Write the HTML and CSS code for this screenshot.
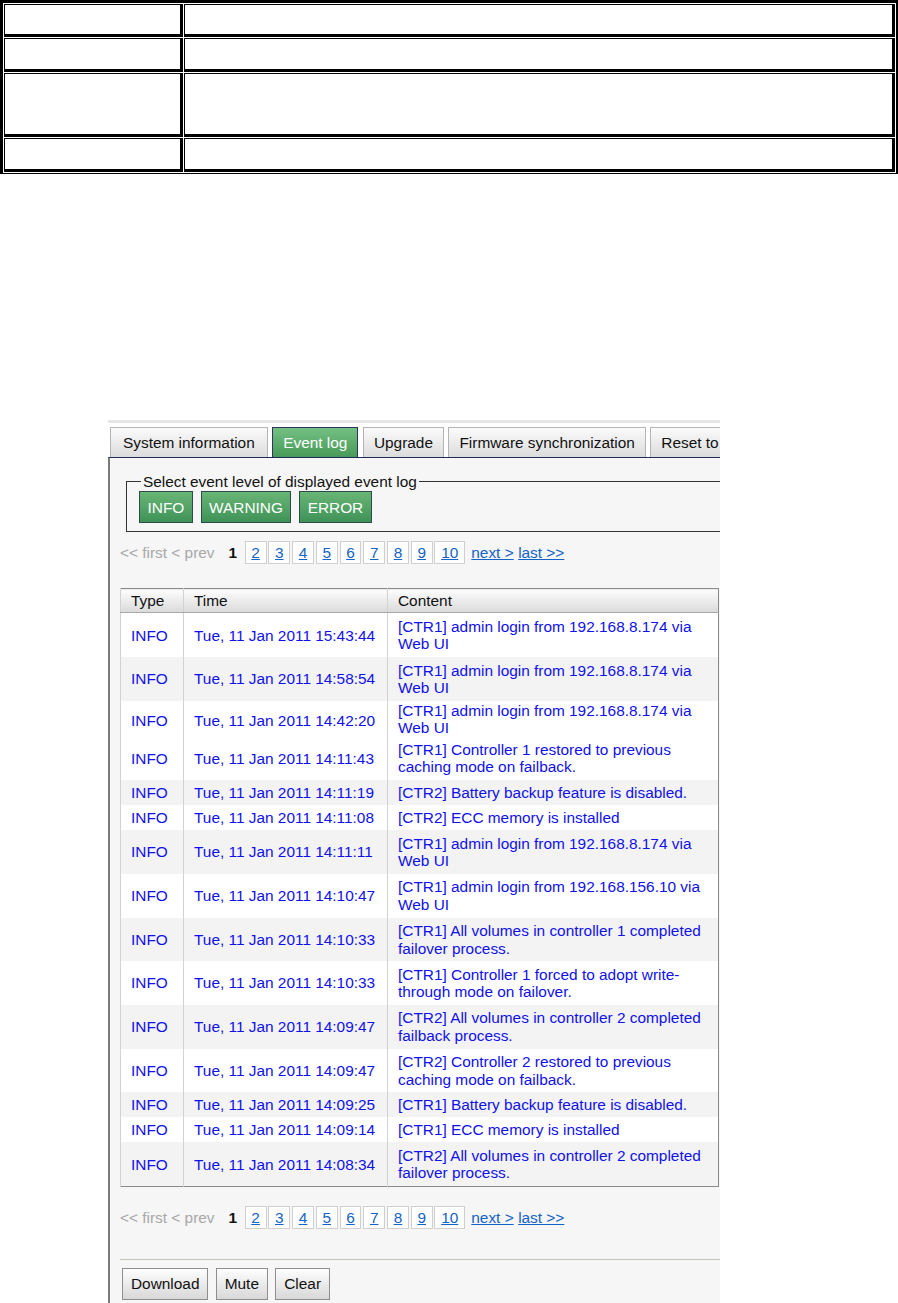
FILE: index.html
```html
<!DOCTYPE html>
<html lang="en">
  <head>
    <meta charset="UTF-8" />
    <meta name="viewport" content="width=device-width, initial-scale=1.0" />
    <title>Event log</title>
    <link rel="stylesheet" href="styles.css">
  </head>
  <body>
    <table class="spec">
      <tr class="r-short"><td class="key"></td><td></td></tr>
      <tr class="r-short2"><td class="key"></td><td></td></tr>
      <tr class="r-tall"><td class="key"></td><td></td></tr>
      <tr class="r-short2"><td class="key"></td><td></td></tr>
    </table>

    <div class="shot">
      <div class="tabs">
        <span class="tab first">System information</span>
        <span class="tab active">Event log</span>
        <span class="tab">Upgrade</span>
        <span class="tab">Firmware synchronization</span>
        <span class="tab">Reset to defaults</span>
      </div>

      <div class="panel">
        <fieldset class="levels">
          <legend>Select event level of displayed event log</legend>
          <button class="btn green">INFO</button>
          <button class="btn green">WARNING</button>
          <button class="btn green">ERROR</button>
        </fieldset>

        <div class="pager">
          <span class="off">&lt;&lt; first &lt; prev</span>
          <b>1</b>
          <a class="num" href="#">2</a>
          <a class="num" href="#">3</a>
          <a class="num" href="#">4</a>
          <a class="num" href="#">5</a>
          <a class="num" href="#">6</a>
          <a class="num" href="#">7</a>
          <a class="num" href="#">8</a>
          <a class="num" href="#">9</a>
          <a class="num" href="#">10</a>
          <a class="step" href="#">next &gt;</a>
          <a class="step" href="#">last &gt;&gt;</a>
        </div>

        <table class="log">
          <colgroup>
            <col class="c-type" />
            <col class="c-time" />
            <col class="c-msg" />
          </colgroup>
          <thead>
            <tr><th>Type</th><th>Time</th><th>Content</th></tr>
          </thead>
          <tbody>
            <tr class="two"><td>INFO</td><td>Tue, 11 Jan 2011 15:43:44</td><td>[CTR1] admin login from 192.168.8.174 via Web UI</td></tr>
            <tr class="two alt"><td>INFO</td><td>Tue, 11 Jan 2011 14:58:54</td><td>[CTR1] admin login from 192.168.8.174 via Web UI</td></tr>
            <tr class="cut"><td>INFO</td><td>Tue, 11 Jan 2011 14:42:20</td><td class="msg">[CTR1] admin login from 192.168.8.174 via Web UI</td></tr>
            <tr class="two"><td>INFO</td><td>Tue, 11 Jan 2011 14:11:43</td><td>[CTR1] Controller 1 restored to previous caching mode on failback.</td></tr>
            <tr class="alt"><td>INFO</td><td>Tue, 11 Jan 2011 14:11:19</td><td>[CTR2] Battery backup feature is disabled.</td></tr>
            <tr><td>INFO</td><td>Tue, 11 Jan 2011 14:11:08</td><td>[CTR2] ECC memory is installed</td></tr>
            <tr class="two alt"><td>INFO</td><td>Tue, 11 Jan 2011 14:11:11</td><td>[CTR1] admin login from 192.168.8.174 via Web UI</td></tr>
            <tr class="two"><td>INFO</td><td>Tue, 11 Jan 2011 14:10:47</td><td>[CTR1] admin login from 192.168.156.10 via Web UI</td></tr>
            <tr class="two alt"><td>INFO</td><td>Tue, 11 Jan 2011 14:10:33</td><td>[CTR1] All volumes in controller 1 completed failover process.</td></tr>
            <tr class="two"><td>INFO</td><td>Tue, 11 Jan 2011 14:10:33</td><td>[CTR1] Controller 1 forced to adopt write-through mode on failover.</td></tr>
            <tr class="two alt"><td>INFO</td><td>Tue, 11 Jan 2011 14:09:47</td><td>[CTR2] All volumes in controller 2 completed failback process.</td></tr>
            <tr class="two"><td>INFO</td><td>Tue, 11 Jan 2011 14:09:47</td><td>[CTR2] Controller 2 restored to previous caching mode on failback.</td></tr>
            <tr class="alt"><td>INFO</td><td>Tue, 11 Jan 2011 14:09:25</td><td>[CTR1] Battery backup feature is disabled.</td></tr>
            <tr><td>INFO</td><td>Tue, 11 Jan 2011 14:09:14</td><td>[CTR1] ECC memory is installed</td></tr>
            <tr class="two alt"><td>INFO</td><td>Tue, 11 Jan 2011 14:08:34</td><td>[CTR2] All volumes in controller 2 completed failover process.</td></tr>
          </tbody>
        </table>

        <div class="pager bottom">
          <span class="off">&lt;&lt; first &lt; prev</span>
          <b>1</b>
          <a class="num" href="#">2</a>
          <a class="num" href="#">3</a>
          <a class="num" href="#">4</a>
          <a class="num" href="#">5</a>
          <a class="num" href="#">6</a>
          <a class="num" href="#">7</a>
          <a class="num" href="#">8</a>
          <a class="num" href="#">9</a>
          <a class="num" href="#">10</a>
          <a class="step" href="#">next &gt;</a>
          <a class="step" href="#">last &gt;&gt;</a>
        </div>

        <div class="actions">
          <button class="btn">Download</button>
          <button class="btn">Mute</button>
          <button class="btn">Clear</button>
        </div>
      </div>
    </div>
  </body>
</html>
```

FILE: styles.css
```css
body {
  margin: 0;
  background: #fff;
  font-family: "Liberation Sans", Arial, sans-serif;
  font-size: 15.4px;
  line-height: 17.4px;
  color: #111;
}

/* document table above the screenshot */
.spec {
  width: 898px;
  table-layout: fixed;
  border-collapse: separate;
  border-spacing: 1px;
  border-style: solid;
  border-color: #000;
  border-width: 3px 2px 1px 3px;
}

.spec td {
  padding: 0;
  border-style: solid;
  border-color: #000;
  border-width: 1px 3px 3px 1px;
}

.spec .key {
  width: 175px;
}

.r-short { height: 33px; }
.r-short2 { height: 34px; }
.r-tall { height: 64px; }

/* screenshot of the web UI */
.shot {
  margin: 246px 0 0 108px;
  width: 612px;
  height: 883px;
  overflow: hidden;
  border-top: 3px solid #e6e6e6;
}

.tabs {
  display: flex;
  gap: 4.5px;
  padding: 4px 0 0 2px;
  white-space: nowrap;
  background: #fff;
}

.tab {
  flex: none;
  height: 29px;
  line-height: 29px;
  padding: 0 10px;
  border: 1px solid #b4b4b4;
  border-bottom: none;
  background: linear-gradient(#fbfbfb, #dcdcdc);
  color: #111;
}

.tab.first {
  padding: 0 12px;
}

.tab.active {
  border-color: #2e3560;
  background: linear-gradient(#74c083, #479a58);
  color: #fff;
}

.panel {
  width: 700px;
  height: 100%;
  padding: 15px 0 0 10px;
  border-top: 1px solid #1f2b5a;
  border-left: 2px solid #7a7a7a;
  background: #f6f6f6;
}

.levels {
  margin: 0 0 0 6px;
  padding: 1px 12px 8px;
  border: 1px solid #333;
}

.levels legend {
  margin-left: 2px;
  padding: 0 2px;
}

.btn {
  height: 32px;
  padding: 0 8px;
  margin: 0 3px 0 0;
  font: inherit;
  color: #111;
  border: 1px solid #8e8e8e;
  background: linear-gradient(#fefefe, #d8d8d8);
  cursor: pointer;
}

.btn.green {
  margin-right: 3.5px;
  padding: 0 7.5px;
  color: #fff;
  border-color: #2f4a4a;
  background: linear-gradient(#68b676, #3f9257);
}

.pager {
  display: flex;
  align-items: center;
  margin-top: 9px;
  height: 23px;
}

.pager .off {
  color: #a8a8a8;
  margin-right: 14px;
}

.pager b {
  margin-right: 7.5px;
}

.pager a {
  color: #1463c8;
}

.pager .num {
  height: 21px;
  line-height: 21px;
  padding: 0 5.7px;
  margin-right: 1.8px;
  border: 1px solid #cfcfcf;
  background: #fff;
}

.pager .step {
  margin-left: 4.5px;
}

.log {
  width: 598px;
  margin-top: 24px;
  table-layout: fixed;
  border-collapse: collapse;
  border: 1px solid #8a8a8a;
  background: #fff;
}

.c-type { width: 63px; }
.c-time { width: 204px; }
.c-msg { width: 331px; }

.log th {
  height: 23px;
  padding: 0 10px;
  text-align: left;
  font-weight: normal;
  color: #111;
  border-left: 1px solid #d2d2d2;
  border-bottom: 1px solid #a8a8a8;
  background: linear-gradient(#fdfdfd, #dadada);
}

.log td {
  height: 25px;
  padding: 0 10px;
  color: #1010ee;
  border-left: 1px solid #d2d2d2;
}

.log tr.two td {
  height: 43.7px;
}

.log tr.alt td {
  background: #f3f3f3;
}

.log tr.cut td {
  height: 24px;
  vertical-align: top;
  padding-top: 11px;
}

.log tr.cut td.msg {
  padding-top: 1px;
}

.pager.bottom {
  margin-top: 19px;
}

.actions {
  margin-top: 30px;
  padding: 8px 0 0 2px;
  border-top: 1px solid #c6c2b4;
}

.actions .btn {
  margin-right: 3px;
}
```
